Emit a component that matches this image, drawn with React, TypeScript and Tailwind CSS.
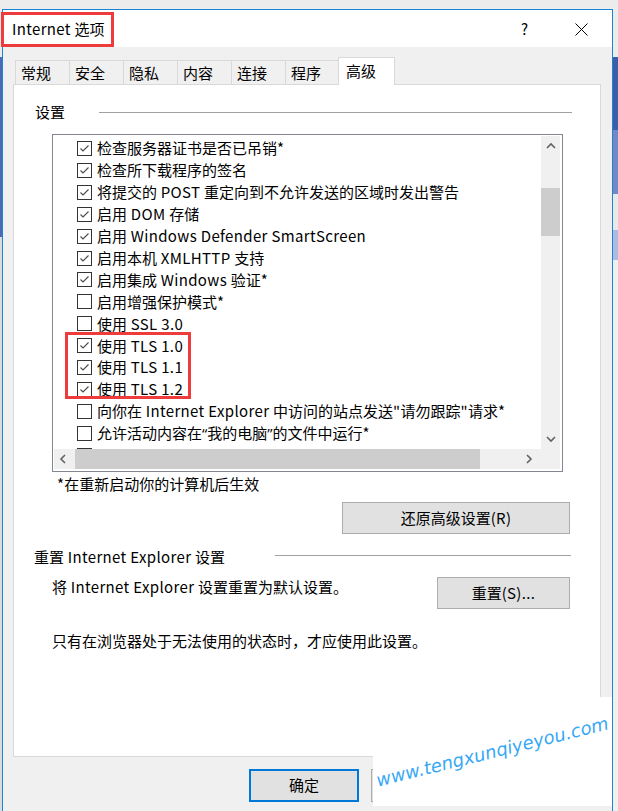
import React from 'react';

type Item = { label: string; checked: boolean };

// the last row is cut by the horizontal scrollbar; only its checkbox edge shows
const items: Item[] = [
  { label: '检查服务器证书是否已吊销*', checked: true },
  { label: '检查所下载程序的签名', checked: true },
  { label: '将提交的 POST 重定向到不允许发送的区域时发出警告', checked: true },
  { label: '启用 DOM 存储', checked: true },
  { label: '启用 Windows Defender SmartScreen', checked: true },
  { label: '启用本机 XMLHTTP 支持', checked: true },
  { label: '启用集成 Windows 验证*', checked: true },
  { label: '启用增强保护模式*', checked: false },
  { label: '使用 SSL 3.0', checked: false },
  { label: '使用 TLS 1.0', checked: true },
  { label: '使用 TLS 1.1', checked: true },
  { label: '使用 TLS 1.2', checked: true },
  { label: '向你在 Internet Explorer 中访问的站点发送"请勿跟踪"请求*', checked: false },
  { label: '允许活动内容在“我的电脑”的文件中运行*', checked: false },
  { label: '', checked: false },
];

const tabs = ['常规', '安全', '隐私', '内容', '连接', '程序'];

// latin runs are a touch wider in the original UI font, curly quotes are narrow
const Mixed: React.FC<{ text: string }> = ({ text }) => (
  <>
    {text
      .split(/([“”]|[\x20-\x7e]+)/)
      .filter(Boolean)
      .map((p, i) =>
        /[“”]/.test(p) ? (
          <span key={i} className="font-['Open_Sans',sans-serif]">
            {p}
          </span>
        ) : /^[\x20-\x7e]+$/.test(p) ? (
          <span key={i} className="tracking-[0.35px]">
            {p}
          </span>
        ) : (
          <React.Fragment key={i}>{p}</React.Fragment>
        )
      )}
  </>
);

const Check: React.FC<{ checked: boolean }> = ({ checked }) => (
  <span className="w-[15px] h-[15px] border border-[#333333] bg-white flex items-center justify-center shrink-0">
    {checked && (
      <svg width="13" height="13" viewBox="0 0 13 13">
        <polyline points="2.5,6.5 5,9 10.5,3.5" fill="none" stroke="#4a4a4a" strokeWidth="1.1" />
      </svg>
    )}
  </span>
);

// small scrollbar arrow
const Chevron: React.FC<{ dir: 'up' | 'down' | 'left' | 'right' }> = ({ dir }) => {
  const pts = {
    up: '1,6 5,2 9,6',
    down: '1,2 5,6 9,2',
    left: '6,1 2,5 6,9',
    right: '2,1 6,5 2,9',
  }[dir];
  const vertical = dir === 'up' || dir === 'down';
  return (
    <svg width={vertical ? 10 : 8} height={vertical ? 8 : 10} viewBox={vertical ? '0 0 10 8' : '0 0 8 10'}>
      <polyline points={pts} fill="none" stroke="#606060" strokeWidth="1.6" />
    </svg>
  );
};

const Button: React.FC<{ label?: string; className?: string; primary?: boolean }> = ({ label, className = '', primary }) => (
  <div
    className={`bg-[#e1e1e1] flex items-center justify-center text-[15px] ${
      primary ? 'border-2 border-[#0078d7]' : 'border border-[#adadad]'
    } ${className}`}
  >
    {label && <Mixed text={label} />}
  </div>
);

const App: React.FC = () => {
  return (
    <div className="w-[618px] h-[811px] overflow-hidden relative bg-[#ececec] flex font-['Noto_Sans_CJK_SC',sans-serif] text-black">
      {/* desktop behind, left edge */}
      <div className="w-[2px] shrink-0 flex flex-col">
        <div className="h-[57px] bg-[#ececec]" />
        <div className="h-[180px] bg-[#4a6ab5]" />
        <div className="flex-1 bg-[#dcdcdc]" />
      </div>

      {/* dialog window */}
      <div className="w-[611px] shrink-0 mt-[9px] border-t border-x border-[#1a84d6] flex flex-col bg-[#f0f0f0]">
        <div className="h-[37px] bg-white flex items-center pl-[9px] pr-[24px] pt-[2px]">
          <span className="text-[15px]">
            <Mixed text="Internet 选项" />
          </span>
          <span className="ml-auto text-[15px]">?</span>
          <svg className="ml-[47px]" width="13" height="13" viewBox="0 0 13 13">
            <path d="M0.5 0.5 L12.5 12.5 M12.5 0.5 L0.5 12.5" stroke="#000" strokeWidth="1" />
          </svg>
        </div>

        <div className="pt-[10px] flex flex-col">
          <div className="flex items-end ml-[12px] -mb-[1px] h-[28px]">
            {tabs.map((t, i) => (
              <div
                key={t}
                className={`w-[54px] h-[25px] border-t border-l border-[#d9d9d9] flex items-center pl-[5px] text-[15px] ${
                  i === tabs.length - 1 ? 'border-r' : ''
                }`}
              >
                {t}
              </div>
            ))}
            <div className="relative z-10 -ml-[1px] w-[57px] h-[28px] bg-white border-t border-x border-[#d9d9d9] flex items-center pl-[7px] text-[15px]">
              高级
            </div>
          </div>

          <div className="ml-[10px] mr-[11px] h-[673px] border border-[#d9d9d9] bg-white flex flex-col">
            <div className="mt-[17px] h-[20px] flex items-center justify-between pl-[21px] pr-[28px]">
              <span className="text-[15px]">设置</span>
              <div className="w-[473px] h-px bg-[#a0a0a0]" />
            </div>

            <div className="ml-[38px] mt-[12px] w-[511px] h-[338px] border border-[#828790] bg-white pt-[1px] pl-[1px] pr-[2px] pb-[2px] grid grid-cols-[1fr_19px] grid-rows-[1fr_20px]">
              <div className="overflow-hidden pl-[23px] pt-[1.5px]">
                {items.map((it, i) => (
                  <div key={i} className="h-[21.93px] flex items-center gap-[5px] whitespace-nowrap text-[15px]">
                    <Check checked={it.checked} />
                    {it.label && (
                      <span>
                        <Mixed text={it.label} />
                      </span>
                    )}
                  </div>
                ))}
              </div>
              <div className="bg-[#f0f0f0] flex flex-col">
                <div className="h-[20px] flex items-center justify-center">
                  <Chevron dir="up" />
                </div>
                <div className="mt-[32px] h-[48px] bg-[#cdcdcd]" />
                <div className="flex-1" />
                <div className="h-[20px] flex items-center justify-center">
                  <Chevron dir="down" />
                </div>
              </div>
              <div className="bg-[#f0f0f0] flex items-center">
                <div className="w-[17px] flex justify-center">
                  <Chevron dir="left" />
                </div>
                <div className="ml-[4px] w-[405px] h-full bg-[#cdcdcd]" />
                <div className="flex-1" />
                <div className="w-[24px] flex justify-center">
                  <Chevron dir="right" />
                </div>
              </div>
              <div className="bg-[#f0f0f0]" />
            </div>

            <div className="mt-[2px] h-[20px] flex items-center pl-[43px] text-[15px]">
              <span>
                <Mixed text="*在重新启动你的计算机后生效" />
              </span>
            </div>

            <div className="mt-[8px] flex justify-end pr-[30px]">
              <Button label="还原高级设置(R)" className="w-[228px] h-[32px]" />
            </div>

            <div className="mt-[13px] h-[20px] flex items-center justify-between pl-[20px] pr-[29px]">
              <span className="text-[15px]">
                <Mixed text="重置 Internet Explorer 设置" />
              </span>
              <div className="w-[296px] h-px bg-[#a0a0a0] -mt-[4px]" />
            </div>

            <div className="mt-[10px] flex items-start justify-between pl-[38px] pr-[30px]">
              <span className="h-[20px] flex items-center text-[15px]">
                <span>
                  <Mixed text="将 Internet Explorer 设置重置为默认设置。" />
                </span>
              </span>
              <Button label="重置(S)..." className="w-[133px] h-[32px]" />
            </div>

            <div className="mt-[22px] h-[20px] flex items-center pl-[38px] text-[15px]">
              只有在浏览器处于无法使用的状态时，才应使用此设置。
            </div>
          </div>

          <div className="mt-[12px] flex pl-[246px] gap-[12px]">
            <Button label="确定" primary className="w-[110px] h-[33px]" />
            <Button className="w-[110px] h-[33px]" />
          </div>
        </div>
      </div>

      {/* desktop behind, right edge */}
      <div className="w-[5px] shrink-0 flex flex-col">
        <div className="h-[57px] bg-[#ececec]" />
        <div className="h-[73px] bg-[#3f5ea8]" />
        <div className="h-[64px] bg-[#7389c6]" />
        <div className="h-[36px] bg-[#e9e9e9]" />
        <div className="h-[30px] bg-[#aebbe0]" />
        <div className="flex-1 bg-[#f0f0f0]" />
      </div>

      {/* annotations */}
      <div className="absolute left-[1px] top-[12px] w-[113px] h-[35px] border-[3px] border-[#ee3b3b]" />
      <div className="absolute left-[65px] top-[332px] w-[126px] h-[67px] border-[3px] border-[#ee3b3b]" />

      {/* watermark */}
      <div className="absolute left-[373px] top-[697px] w-[239px] h-[109px] bg-white flex items-center justify-center overflow-hidden">
        <span className="-rotate-[14deg] italic text-[18px] font-['DejaVu_Sans',sans-serif] text-[#37a8f5] whitespace-nowrap">
          www.tengxunqiyeyou.com
        </span>
      </div>
    </div>
  );
};

export default App;
